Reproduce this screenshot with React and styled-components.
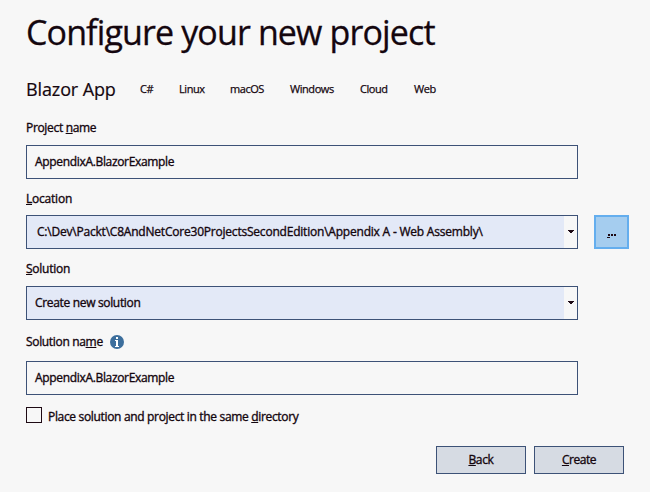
import React from "react";
import styled, { createGlobalStyle } from "styled-components";

const GlobalStyle = createGlobalStyle`
  * { box-sizing: border-box; }
  body { margin: 0; background: #f7f7f7; }
`;

const Page = styled.main`
  width: 650px;
  height: 492px;
  padding: 8px 26px 0;
  display: flex;
  flex-direction: column;
  background: #f7f7f7;
  color: #14060e;
  font: 12px/16px "Open Sans", "Noto Sans", sans-serif;
  white-space: pre;
  overflow: hidden;
`;

const Title = styled.h1`
  margin: 0;
  height: 48px;
  font-size: 34px;
  line-height: 48px;
  font-weight: 400;
  letter-spacing: -0.87px;
  -webkit-text-stroke: 0.3px currentColor;
`;

const Template = styled.div`
  display: flex;
  align-items: center;
  height: 24px;
  margin-top: 21px;
`;

const TemplateName = styled.h2`
  margin: 0;
  width: 114px;
  font-size: 18px;
  line-height: 24px;
  font-weight: 400;
  letter-spacing: -0.12px;
  -webkit-text-stroke: 0.2px currentColor;
`;

const Tag = styled.span`
  width: ${(p) => p.$width}px;
  font-size: 11px;
  letter-spacing: -0.44px;
  -webkit-text-stroke: 0.25px currentColor;
`;

const Text = styled.span`
  letter-spacing: ${(p) => p.$spacing ?? -0.33}px;
  -webkit-text-stroke: 0.35px currentColor;
`;

const AccessKey = styled.span`
  text-decoration: underline;
  text-decoration-thickness: 1px;
  text-underline-offset: 1px;
  text-decoration-skip-ink: none;
`;

const Field = styled.div`
  display: flex;
  flex-direction: column;
  margin-top: ${(p) => p.$gap}px;
`;

const Label = styled.label`
  display: flex;
  align-items: center;
  height: 16px;
  margin-bottom: ${(p) => p.$gap}px;
`;

const Row = styled.div`
  display: flex;
  gap: 16px;
  margin-right: -5px;
`;

const Input = styled.div`
  width: 552px;
  height: 34px;
  flex-shrink: 0;
  padding-left: 8px;
  display: flex;
  align-items: center;
  border: 1px solid #3d5277;
`;

const Combo = styled(Input)`
  padding-left: ${(p) => p.$inset}px;
  background: #e3e9f7;
`;

const ComboArrow = styled.span`
  width: 13px;
  height: 100%;
  margin-left: auto;
  display: flex;
  align-items: center;
  justify-content: center;
  background: #f7f7f7;
`;

const BrowseButton = styled.button`
  width: 35px;
  height: 34px;
  flex-shrink: 0;
  padding: 8px 0 0;
  border: 2px solid #64aeee;
  background: #a5cdef;
  display: flex;
  align-items: center;
  justify-content: center;
`;

const InfoIcon = styled.svg`
  margin-left: 7px;
`;

const CheckRow = styled.label`
  display: flex;
  align-items: center;
  gap: 6px;
  height: 16px;
  margin-top: 12px;
`;

const CheckBox = styled.span`
  width: 16px;
  height: 16px;
  border: 1px solid #1e0a14;
`;

const CheckText = styled(Text)`
  padding-top: 3px;
`;

const Actions = styled.div`
  display: flex;
  justify-content: flex-end;
  gap: 8px;
  margin-top: 23px;
`;

const ActionButton = styled.button`
  width: 90px;
  height: 28px;
  padding: 0;
  border: 1px solid #3d5277;
  background: #d6dbe3;
  color: inherit;
  font: inherit;
`;

const TAGS = [
  ["C#", 39],
  ["Linux", 51],
  ["macOS", 60],
  ["Windows", 70],
  ["Cloud", 54],
  ["Web", 24],
];

function Arrow() {
  return (
    <ComboArrow>
      <svg width="7" height="4" viewBox="0 0 7 4" shapeRendering="crispEdges">
        <path d="M0.5 0H6.5V1H5.5V2H4.5V3H2.5V2H1.5V1H0.5Z" fill="#1e0a14" />
      </svg>
    </ComboArrow>
  );
}

export default function App() {
  return (
    <Page>
      <GlobalStyle />
      <Title>Configure your new project</Title>
      <Template>
        <TemplateName>Blazor App</TemplateName>
        {TAGS.map(([name, width]) => (
          <Tag key={name} $width={width}>{name}</Tag>
        ))}
      </Template>
      <Field $gap={19}>
        <Label $gap={9}>
          <Text>Project <AccessKey>n</AccessKey>ame</Text>
        </Label>
        <Input><Text>AppendixA.BlazorExample</Text></Input>
      </Field>
      <Field $gap={12}>
        <Label $gap={8}>
          <Text $spacing={-0.22}><AccessKey>L</AccessKey>ocation</Text>
        </Label>
        <Row>
          <Combo $inset={10}>
            <Text $spacing={-0.21}>
              {"C:\\Dev\\Packt\\C8AndNetCore30ProjectsSecondEdition\\Appendix A - Web Assembly\\"}
            </Text>
            <Arrow />
          </Combo>
          <BrowseButton aria-label="Browse">
            <svg width="9" height="4" viewBox="0 0 9 4" shapeRendering="crispEdges">
              <path d="M1 0h2v2H1zM4 0h2v2H4zM7 0h2v2H7zM0 3h3v1H0z" fill="#1e0a14" />
            </svg>
          </BrowseButton>
        </Row>
      </Field>
      <Field $gap={12}>
        <Label $gap={9}>
          <Text $spacing={-0.26}><AccessKey>S</AccessKey>olution</Text>
        </Label>
        <Combo $inset={8}>
          <Text>Create new solution</Text>
          <Arrow />
        </Combo>
      </Field>
      <Field $gap={14}>
        <Label $gap={11}>
          <Text>Solution na<AccessKey>m</AccessKey>e</Text>
          <InfoIcon width="14" height="14" viewBox="0 0 14 14">
            <circle cx="7" cy="7" r="7" fill="#3c6e9c" />
            <path d="M6 2h2v2H6zM5 5h3v6h1v1H5v-1h1V6H5z" fill="#fff" />
          </InfoIcon>
        </Label>
        <Input><Text>AppendixA.BlazorExample</Text></Input>
      </Field>
      <CheckRow>
        <CheckBox />
        <CheckText>Place solution and project in the same <AccessKey>d</AccessKey>irectory</CheckText>
      </CheckRow>
      <Actions>
        <ActionButton><Text><AccessKey>B</AccessKey>ack</Text></ActionButton>
        <ActionButton><Text $spacing={-0.45}><AccessKey>C</AccessKey>reate</Text></ActionButton>
      </Actions>
    </Page>
  );
}
